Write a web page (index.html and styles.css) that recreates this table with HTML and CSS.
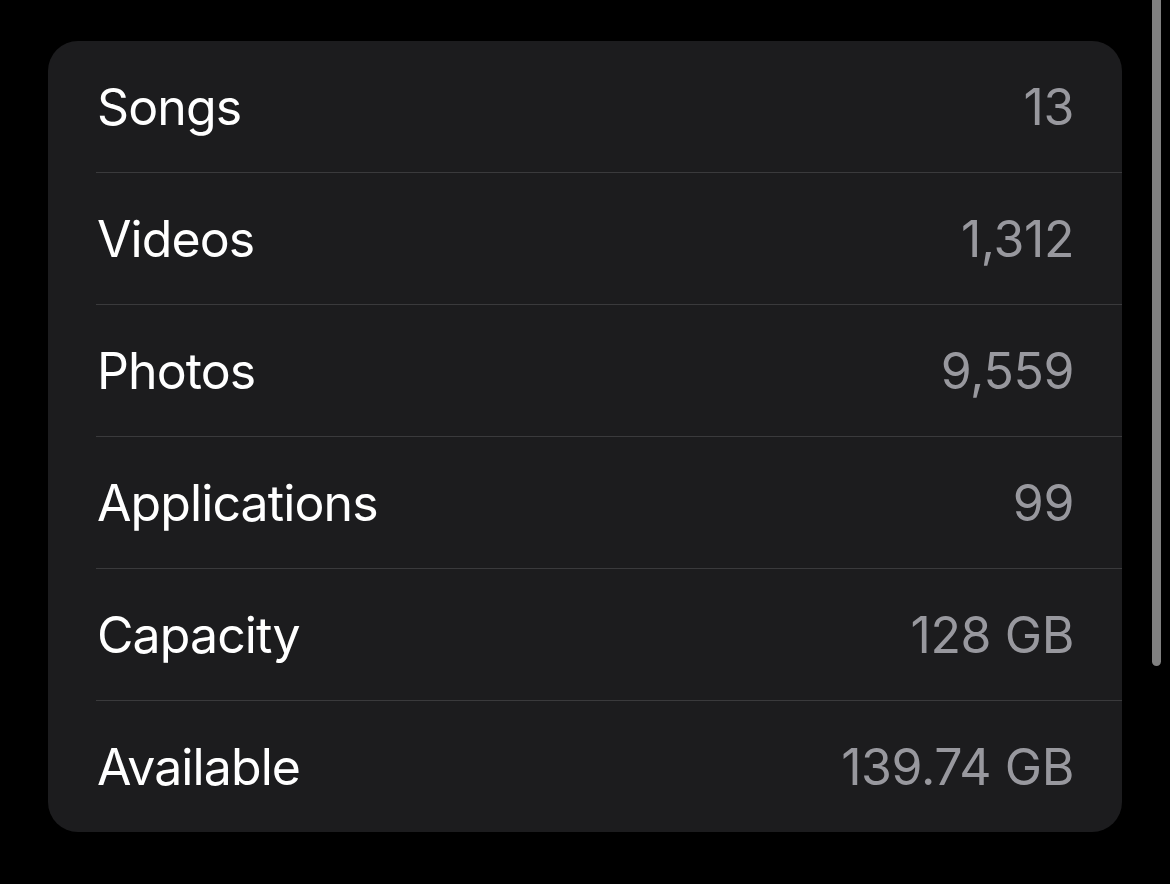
FILE: index.html
```html
<!DOCTYPE html>
<html>
<head>
<meta charset="utf-8">
<link rel="stylesheet" href="styles.css">
</head>
<body>
<div class="card">
  <div class="row"><div class="row-inner"><span class="label">Songs</span><span class="value">13</span></div></div>
  <div class="row"><div class="row-inner"><span class="label">Videos</span><span class="value">1,312</span></div></div>
  <div class="row"><div class="row-inner"><span class="label">Photos</span><span class="value">9,559</span></div></div>
  <div class="row"><div class="row-inner"><span class="label">Applications</span><span class="value">99</span></div></div>
  <div class="row"><div class="row-inner"><span class="label">Capacity</span><span class="value">128 GB</span></div></div>
  <div class="row"><div class="row-inner"><span class="label">Available</span><span class="value">139.74 GB</span></div></div>
</div>
<div class="scrollbar"></div>
</body>
</html>
```
FILE: styles.css
```css
html, body {
  margin: 0;
  padding: 0;
  background: #000;
  width: 1170px;
  height: 884px;
  overflow: hidden;
  font-family: Inter, "Noto Sans", sans-serif;
}
body {
  padding-top: 41px;
  box-sizing: border-box;
  position: relative;
}
.card {
  margin-left: 48px;
  width: 1074px;
  background: #1c1c1e;
  border-radius: 30px;
  overflow: hidden;
}
.row {
  padding-left: 48px;
}
.row-inner {
  height: 131px;
  display: flex;
  align-items: center;
  justify-content: space-between;
  padding-right: 48px;
  border-top: 1px solid #3a3a3c;
  font-size: 50px;
}
.row:first-child .row-inner {
  border-top: none;
}
.label {
  color: #ffffff;
  padding-left: 1px;
  letter-spacing: -0.9px;
}
.value {
  color: #98989e;
  letter-spacing: -0.4px;
}
.scrollbar {
  position: absolute;
  left: 1152px;
  top: -10px;
  width: 9px;
  height: 676px;
  border-radius: 5px;
  background: #808080;
}
```
